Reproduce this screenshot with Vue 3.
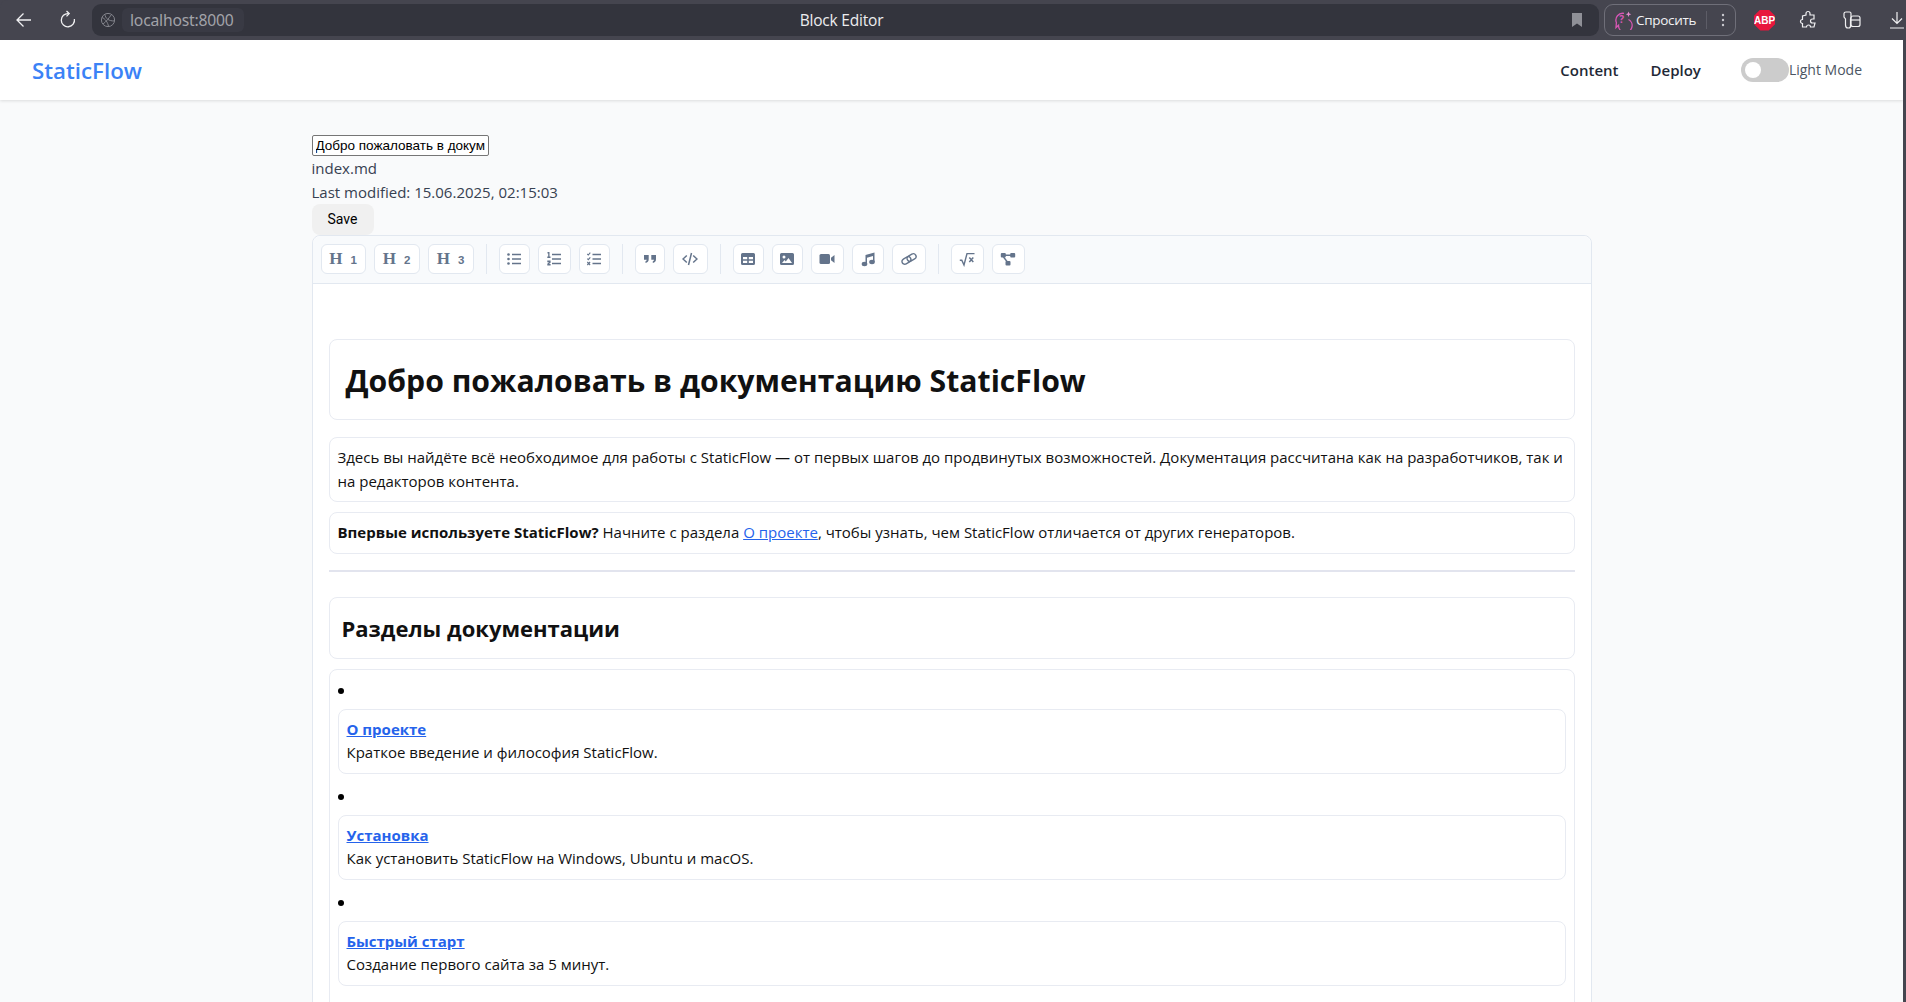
<template>
  <div class="window">
    <div class="browser">
      <svg class="bicon back" width="20" height="20" viewBox="0 0 20 20"><path d="M17 10H3.500M9.500 3.500 3 10l6.500 6.500" fill="none" stroke="#f0f0f2" stroke-width="1.300"/></svg>
      <svg class="bicon reload" width="20" height="20" viewBox="0 0 20 20"><path d="M10.500 3.600A6.600 6.600 0 1 0 16.400 9" fill="none" stroke="#f0f0f2" stroke-width="1.300"/><path d="M8.500 1 11.200 3.600 8.500 6.400" fill="none" stroke="#f0f0f2" stroke-width="1.300"/></svg>
      <div class="address">
        <svg class="globe" width="16" height="16" viewBox="0 0 16 16"><g fill="none" stroke="#83848c" stroke-width="1"><circle cx="8" cy="8" r="6.600"/><path d="M2 5.500c3 1 6 5 6.500 9M5 2.300c0 4 4 7 9.500 6.600M11.500 2.500C9 6 6 10 3 12"/></g></svg>
        <span class="host">localhost:8000</span>
        <span class="tab-title">Block Editor</span>
        <svg width="12" height="14" viewBox="0 0 12 14"><path d="M1 0h10v14L6 10.400 1 14z" fill="#8f9097"/></svg>
      </div>
      <div class="ask">
        <svg width="20" height="20" viewBox="0 0 20 20"><path d="M15.500 9.500A6.800 6.800 0 1 1 5.500 15.300L3 17.600l.4-5A6.800 6.800 0 0 1 11 3.400" fill="none" stroke="#d957b5" stroke-width="1.300"/><path d="M15.500 1.500l.8 2 2 .8-2 .8-.8 2-.8-2-2-.8 2-.8z" fill="#e58ad0"/><text x="6.300" y="13" class="ask-q">?</text></svg>
        <span class="ask-label">Спросить</span>
        <i class="ask-sep"></i>
        <svg width="4" height="14" viewBox="0 0 4 14"><g fill="#c9c9ce"><circle cx="2" cy="2" r="1.200"/><circle cx="2" cy="7" r="1.200"/><circle cx="2" cy="12" r="1.200"/></g></svg>
      </div>
      <div class="abp"><span>ABP</span></div>
      <svg class="puzzle" width="20" height="20" viewBox="0 0 20 20"><path d="M8 3.500a2 2 0 0 1 4 0V5h4v4h-1.500a2 2 0 0 0 0 4H17l-1 4h-3.500a2 2 0 0 0-4 0H4.500v-3.500a2 2 0 0 1 0-4V6L8 5z" fill="none" stroke="#f0f0f2" stroke-width="1.200"/></svg>
      <svg class="panels" width="20" height="20" viewBox="0 0 20 20"><g fill="none" stroke="#f0f0f2" stroke-width="1.200"><path d="M2 3.500C2 2.500 3 2 4 2h3.500C8.500 2 9 3 9 3.500V7l-.5 2v7c0 1-.8 2-2 2H6C4 18 3.500 16.500 3.500 15V9L2 7z"/><rect x="9" y="6" width="9" height="10.500" rx="2"/><path d="M9 10h9"/></g></svg>
      <svg class="dl" width="16" height="18" viewBox="0 0 16 18"><path d="M8 1v11M3 7.500 8 12.500l5-5M1 17h14" fill="none" stroke="#f0f0f2" stroke-width="1.200"/></svg>
    </div>

    <div class="page">
      <header class="navbar">
        <div class="logo">StaticFlow</div>
        <nav class="nav">
          <a class="nav-link">Content</a>
          <a class="nav-link">Deploy</a>
        </nav>
        <div class="theme">
          <span class="switch"><i class="knob"></i></span>
          <span class="theme-label">Light Mode</span>
        </div>
      </header>

      <main class="main">
        <input class="title-input" value="Добро пожаловать в документацию StaticFlow" />
        <div class="meta">index.md</div>
        <div class="meta">Last modified: 15.06.2025, 02:15:03</div>
        <button class="save">Save</button>

        <section class="editor">
          <div class="toolbar">
            <template v-for="(group, i) in toolGroups" :key="i">
              <i v-if="i" class="divider"></i>
              <div class="group">
                <button v-for="t in group" :key="t.name" class="tool" :style="{ width: t.w + 'px' }" :title="t.name">
                  <template v-if="t.level">
                    <span class="h-letter">H</span><span class="h-level">{{ t.level }}</span>
                  </template>
                  <svg v-else width="16" height="16" viewBox="0 0 16 16" fill="#64748b" v-html="t.svg"></svg>
                </button>
              </div>
            </template>
          </div>

          <div class="content">
            <div class="block h1-block"><h1>Добро пожаловать в документацию StaticFlow</h1></div>
            <div class="block"><p>Здесь вы найдёте всё необходимое для работы с StaticFlow — от первых шагов до продвинутых возможностей. Документация рассчитана как на разработчиков, так и на редакторов контента.</p></div>
            <div class="block"><p><strong>Впервые используете StaticFlow?</strong> Начните с раздела <a class="inline-link">О проекте</a>, чтобы узнать, чем StaticFlow отличается от других генераторов.</p></div>
            <hr class="rule" />
            <div class="block h2-block"><h2>Разделы документации</h2></div>
            <div class="block list-block">
              <div v-for="s in sections" :key="s.title" class="item">
                <span class="bullet"></span>
                <div class="block inner">
                  <p><a class="section-link">{{ s.title }}</a></p>
                  <p>{{ s.text }}</p>
                </div>
              </div>
            </div>
          </div>
        </section>
      </main>
    </div>
  </div>
</template>

<script setup>
const toolGroups = [
  [
    { name: "Heading 1", w: 45, level: 1 },
    { name: "Heading 2", w: 46, level: 2 },
    { name: "Heading 3", w: 46, level: 3 },
  ],
  [
    { name: "Bullet list", w: 31, svg: '<circle cx="2.500" cy="3.500" r="1.300"/><circle cx="2.500" cy="8" r="1.300"/><circle cx="2.500" cy="12.500" r="1.300"/><path d="M6 2.700h9v1.600H6zM6 7.200h9v1.600H6zM6 11.700h9v1.600H6z"/>' },
    { name: "Ordered list", w: 33, svg: '<path d="M6 2.700h9v1.600H6zM6 7.200h9v1.600H6zM6 11.700h9v1.600H6z"/><path d="M1.500 1h2v4.500h1V7H1.300V5.500h.9V2.400h-.7zM1.300 9.500h3.300v2.200l-1.600 1.300h1.600v1.500H1.300v-1.800l1.700-1.400H1.300z"/>' },
    { name: "Task list", w: 31, svg: '<path d="M6.500 2.700H15v1.600H6.500zM6.500 7.200H15v1.600H6.500zM6.500 11.700H15v1.600H6.500z"/><path d="M1.300 3l1 1 2-2.300" fill="none" stroke="#64748b" stroke-width="1.100"/><path d="M1.300 7.700l1 1 2-2.300" fill="none" stroke="#64748b" stroke-width="1.100"/><path d="M1.300 11l2.800 3M4.100 11l-2.800 3" fill="none" stroke="#64748b" stroke-width="1.100"/>' },
  ],
  [
    { name: "Quote", w: 30, svg: '<path d="M2 4h4.700v4.300c0 2-1.200 3.400-3.200 3.700v-1.700c.7-.2 1.200-.7 1.200-1.500H2zM9.300 4H14v4.300c0 2-1.200 3.400-3.200 3.700v-1.700c.7-.2 1.200-.7 1.200-1.500H9.300z"/>' },
    { name: "Code", w: 35, svg: '<path d="M4.800 4.500 1 8l3.800 3.500M11.200 4.500 15 8l-3.800 3.500M9.500 2 6.500 14" fill="none" stroke="#64748b" stroke-width="1.500"/>' },
  ],
  [
    { name: "Table", w: 31, svg: '<path fill-rule="evenodd" d="M2.500 2h11A1.500 1.500 0 0 1 15 3.500v9a1.500 1.500 0 0 1-1.500 1.500h-11A1.500 1.500 0 0 1 1 12.500v-9A1.500 1.500 0 0 1 2.500 2zM3 6v2.200h4.200V6zm5.800 0v2.200H13V6zM3 9.800V12h4.200V9.800zm5.800 0V12H13V9.800z"/>' },
    { name: "Image", w: 31, svg: '<path fill-rule="evenodd" d="M2.500 2h11A1.500 1.500 0 0 1 15 3.500v9a1.500 1.500 0 0 1-1.500 1.500h-11A1.500 1.500 0 0 1 1 12.500v-9A1.500 1.500 0 0 1 2.500 2zM5 4.500A1.500 1.500 0 1 0 5 7.500 1.500 1.500 0 0 0 5 4.500zM9.500 7 6.800 10.500 5.500 9 3 12h10z"/>' },
    { name: "Video", w: 33, svg: '<rect x="0.500" y="3" width="10.500" height="10" rx="1.500"/><path d="M12 6.800 15.500 4v8L12 9.200z"/>' },
    { name: "Audio", w: 32, svg: '<path d="M5.500 4 14.500 1.500V11H13V5L7 6.700V13H5.500z"/><ellipse cx="4.500" cy="13" rx="2.800" ry="2.200"/><ellipse cx="12" cy="11" rx="2.800" ry="2.200"/>' },
    { name: "Link", w: 34, svg: '<g fill="none" stroke="#64748b" stroke-width="1.400" transform="rotate(-30 8 8)"><rect x="0.300" y="5.200" width="9.500" height="5.600" rx="2.800"/><rect x="6.200" y="5.200" width="9.500" height="5.600" rx="2.800"/></g>' },
  ],
  [
    { name: "Math", w: 33, svg: '<path d="M.800 9.200h2L5 14 8 2.600h7.500" fill="none" stroke="#64748b" stroke-width="1.400"/><path d="M10.300 6.500l4 4.500M14.300 6.500l-4 4.500" fill="none" stroke="#64748b" stroke-width="1.500"/>' },
    { name: "Diagram", w: 33, svg: '<rect x="0.800" y="2" width="5" height="4.500" rx="1"/><rect x="10.200" y="2" width="5" height="4.500" rx="1"/><rect x="5.500" y="10" width="5" height="4.500" rx="1"/><path d="M5 4.300h6M3.500 6 7 10.500" fill="none" stroke="#64748b" stroke-width="1.400"/>' },
  ],
];

const sections = [
  { title: "О проекте", text: "Краткое введение и философия StaticFlow." },
  { title: "Установка", text: "Как установить StaticFlow на Windows, Ubuntu и macOS." },
  { title: "Быстрый старт", text: "Создание первого сайта за 5 минут." },
];
</script>

<style>
html, body { margin: 0; height: 100%; overflow: hidden; background: #45454f; }
</style>

<style scoped>
* { box-sizing: border-box; }
.window { height: 1002px; overflow: hidden; font-family: "Open Sans", "Noto Sans", sans-serif; color: #374151; }

.browser { height: 40px; background: #45454f; display: flex; align-items: center; color: #f0f0f2; border-radius: 8px 0 0 0; }
.bicon.back { margin-left: 14px; }
.bicon.reload { margin-left: 24px; margin-right: 14px; }
.address { width: 1507px; height: 32px; background: #33343d; border-radius: 9px; display: flex; align-items: center; padding: 0 16px 0 8px; font-size: 16px; }
.globe { margin: 0 6px 0 0; }
.host { width: 122px; height: 24px; line-height: 24px; border-radius: 6px; background: #393a44; color: #a2a3a9; padding-left: 8px; font-family: "Noto Sans", sans-serif; font-size: 15.700px; letter-spacing: -0.200px; }
.tab-title { flex: 1; text-align: center; color: #ececef; padding-right: 132px; font-size: 15.500px; letter-spacing: -0.200px; }
.ask { margin-left: 5px; width: 132px; height: 32px; border: 1px solid #6f6f79; border-radius: 9px; display: flex; align-items: center; padding-left: 8px; font-size: 13.500px; }
.ask-q { font-size: 10px; font-weight: 700; fill: #d957b5; font-family: "Open Sans", sans-serif; }
.ask-label { margin-left: 3px; color: #f2f2f4; letter-spacing: -0.300px; }
.ask-sep { width: 1px; height: 18px; background: #5d5d67; margin: 0 14px 0 10px; }
.abp { margin-left: 18px; width: 21px; height: 21px; background: #e8173d; clip-path: polygon(30% 0, 70% 0, 100% 30%, 100% 70%, 70% 100%, 30% 100%, 0 70%, 0 30%); display: flex; align-items: center; justify-content: center; color: #fff; font: 700 10px "Liberation Sans", sans-serif; }
.puzzle { margin-left: 23px; }
.panels { margin-left: 24px; }
.dl { margin-left: 27px; }

.page { margin-right: 3px; background: #f9fafb; height: 962px; overflow: hidden; }
.navbar { height: 60px; background: #fff; box-shadow: 0 1px 3px rgba(0, 0, 0, 0.12); display: flex; align-items: center; padding: 0 41px 0 32px; }
.logo { font-size: 22.300px; font-weight: 600; color: #3b82f6; margin-top: 1px; }
.nav { margin-left: auto; display: flex; gap: 32px; }
.nav-link { font-size: 15px; font-weight: 600; color: #1f2937; }
.theme { display: flex; align-items: center; margin-left: 40px; }
.switch { width: 48px; height: 24px; background: #ccc; border-radius: 12px; padding: 4px; display: block; }
.knob { display: block; width: 16px; height: 16px; background: #fff; border-radius: 50%; }
.theme-label { font-size: 14px; color: #4b5563; margin-top: -1px; }

.main { width: 1280px; margin: 0 auto; padding-top: 35px; }
.title-input { display: block; width: 177px; height: 21px; padding: 1px 3px; border: 1px solid #767676; border-radius: 2px; background: #fff; color: #000; font: 13.500px "Liberation Sans", sans-serif; outline: none; }
.meta { font-size: 15px; line-height: 24px; }
.save { display: block; width: 62px; height: 31px; background: #f0f0f0; border: 0; border-radius: 8px; color: #000; font: 14px "Roboto", sans-serif; padding: 0 0 2px; }

.editor { background: #fff; border: 1px solid #e2e8f0; border-radius: 8px 8px 0 0; }
.toolbar { height: 48px; background: #f8fafc; border-bottom: 1px solid #e2e8f0; border-radius: 8px 8px 0 0; display: flex; align-items: center; padding-left: 8px; padding-bottom: 1px; }
.group { display: flex; gap: 8px; }
.divider { width: 1px; height: 30px; background: #e2e8f0; margin: 0 12px; }
.tool { height: 30px; background: #fff; border: 1px solid #e2e8f0; border-radius: 6px; display: flex; align-items: center; justify-content: center; padding: 0; color: #64748b; }
.h-letter { font: 700 17px "Liberation Serif", serif; }
.h-level { font: 700 11.500px "Liberation Sans", sans-serif; margin-left: 8px; margin-top: 2px; }

.content { padding: 55px 16px 60px; color: #111; }
.block { border: 1px solid #e8ebf2; border-radius: 8px; background: #fff; padding: 8px; margin-bottom: 10px; }
p, h1, h2 { margin: 0; }
p { font-size: 15px; line-height: 23.500px; }
.h1-block { height: 81px; padding: 2px 16px 0; display: flex; align-items: center; margin-bottom: 17px; }
h1 { font-size: 30.200px; font-weight: 700; }
.rule { border: 0; border-top: 2px solid #e2e4ee; margin: 16px 0 25px; }
.h2-block { height: 62px; padding: 1px 12px 0; display: flex; align-items: center; }
h2 { font-size: 22px; font-weight: 700; }
.inline-link { color: #2563eb; text-decoration: underline; }
.section-link { color: #2563eb; font-weight: 700; text-decoration: underline; }
.list-block { padding-bottom: 40px; }
.item { height: 106px; padding-top: 31px; position: relative; }
.inner { margin: 0; height: 65px; }
.bullet { position: absolute; left: 0; top: 10px; width: 6px; height: 6px; border-radius: 50%; background: #000; }
</style>
